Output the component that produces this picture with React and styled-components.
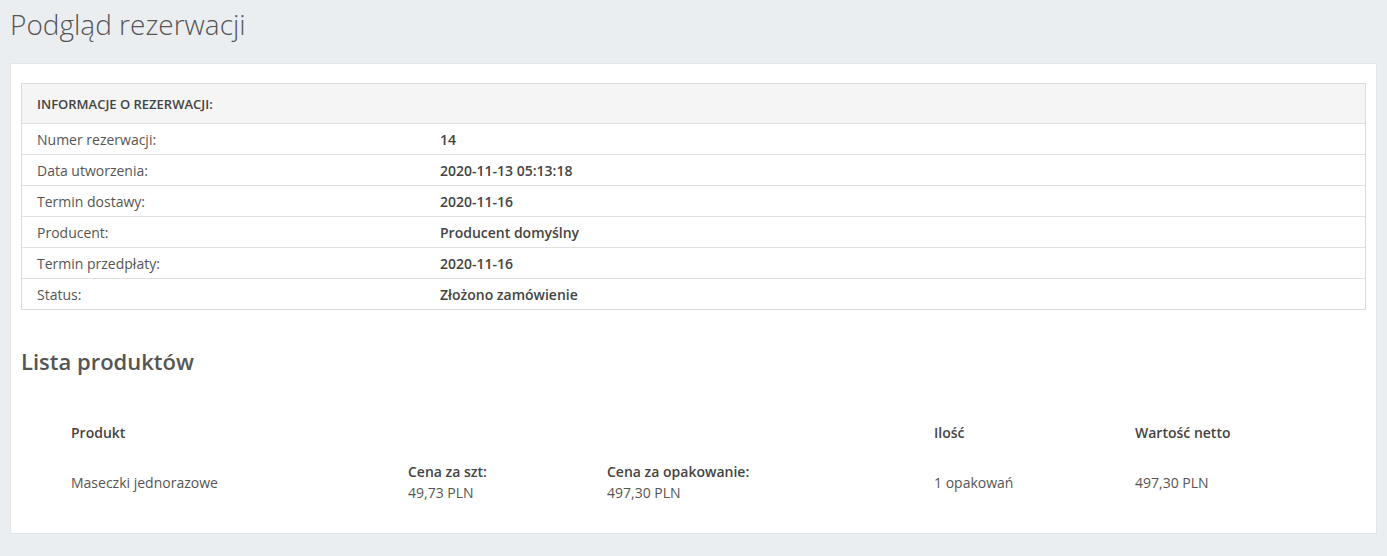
import styled, { createGlobalStyle } from "styled-components"

const GlobalStyle = createGlobalStyle`
  html, body {
    margin: 0;
    padding: 0;
    background: #ebeef1;
    font-family: "Open Sans", "Liberation Sans", sans-serif;
    color: #555;
  }
  * { box-sizing: border-box; }
`

const Page = styled.div`
  padding: 6px 10px 22px 10px;
`
const PageTitle = styled.h1`
  margin: 0 0 21px 0;
  font-size: 28px;
  font-weight: 300;
  line-height: 36px;
  color: #555;
`
const Card = styled.div`
  background: #fff;
  border: 1px solid #e3e6e8;
  padding: 19px 10px 30px 10px;
`
const InfoTable = styled.div`
  border: 1px solid #dcdcdc;
`
const InfoHeader = styled.div`
  height: 39px;
  display: flex;
  align-items: center;
  padding: 0 15px;
  background: #f5f5f5;
  font-size: 13px;
  font-weight: 600;
  color: #444;
`
const InfoRow = styled.div`
  display: grid;
  grid-template-columns: 403px 1fr;
  height: 31px;
  align-items: center;
  padding: 0 15px;
  border-top: 1px solid #e0e0e0;
  font-size: 14px;
`
const Label = styled.div`
  color: #555;
`
const Value = styled.div`
  font-weight: 600;
  color: #444;
`
const SectionTitle = styled.h2`
  margin: 36px 0 0 0;
  font-size: 22px;
  font-weight: 600;
  line-height: 30px;
  color: #555;
`
const ProductGrid = styled.div`
  display: grid;
  grid-template-columns: 337px 199px 327px 201px 1fr;
  padding: 47px 0 0 50px;
  font-size: 14px;
  color: #555;
`
const HeadCell = styled.div`
  font-weight: 600;
  color: #444;
  line-height: 20px;
  grid-column: ${p => p.$col || "auto"};
`
const Cell = styled.div`
  display: flex;
  flex-direction: column;
  justify-content: center;
  line-height: 21px;
  padding-top: 18px;
`
const CellLabel = styled.span`
  font-weight: 600;
  color: #444;
`

const info = [
  ["Numer rezerwacji:", "14"],
  ["Data utworzenia:", "2020-11-13 05:13:18"],
  ["Termin dostawy:", "2020-11-16"],
  ["Producent:", "Producent domyślny"],
  ["Termin przedpłaty:", "2020-11-16"],
  ["Status:", "Złożono zamówienie"],
]

export default function App() {
  return (
    <>
      <GlobalStyle />
      <Page>
        <PageTitle>Podgląd rezerwacji</PageTitle>
        <Card>
          <InfoTable>
            <InfoHeader>INFORMACJE O REZERWACJI:</InfoHeader>
            {info.map(([l, v]) => (
              <InfoRow key={l}>
                <Label>{l}</Label>
                <Value>{v}</Value>
              </InfoRow>
            ))}
          </InfoTable>
          <SectionTitle>Lista produktów</SectionTitle>
          <ProductGrid>
            <HeadCell $col="1">Produkt</HeadCell>
            <HeadCell $col="4">Ilość</HeadCell>
            <HeadCell $col="5">Wartość netto</HeadCell>
            <Cell>Maseczki jednorazowe</Cell>
            <Cell>
              <CellLabel>Cena za szt:</CellLabel>
              <span>49,73 PLN</span>
            </Cell>
            <Cell>
              <CellLabel>Cena za opakowanie:</CellLabel>
              <span>497,30 PLN</span>
            </Cell>
            <Cell>1 opakowań</Cell>
            <Cell>497,30 PLN</Cell>
          </ProductGrid>
        </Card>
      </Page>
    </>
  )
}
